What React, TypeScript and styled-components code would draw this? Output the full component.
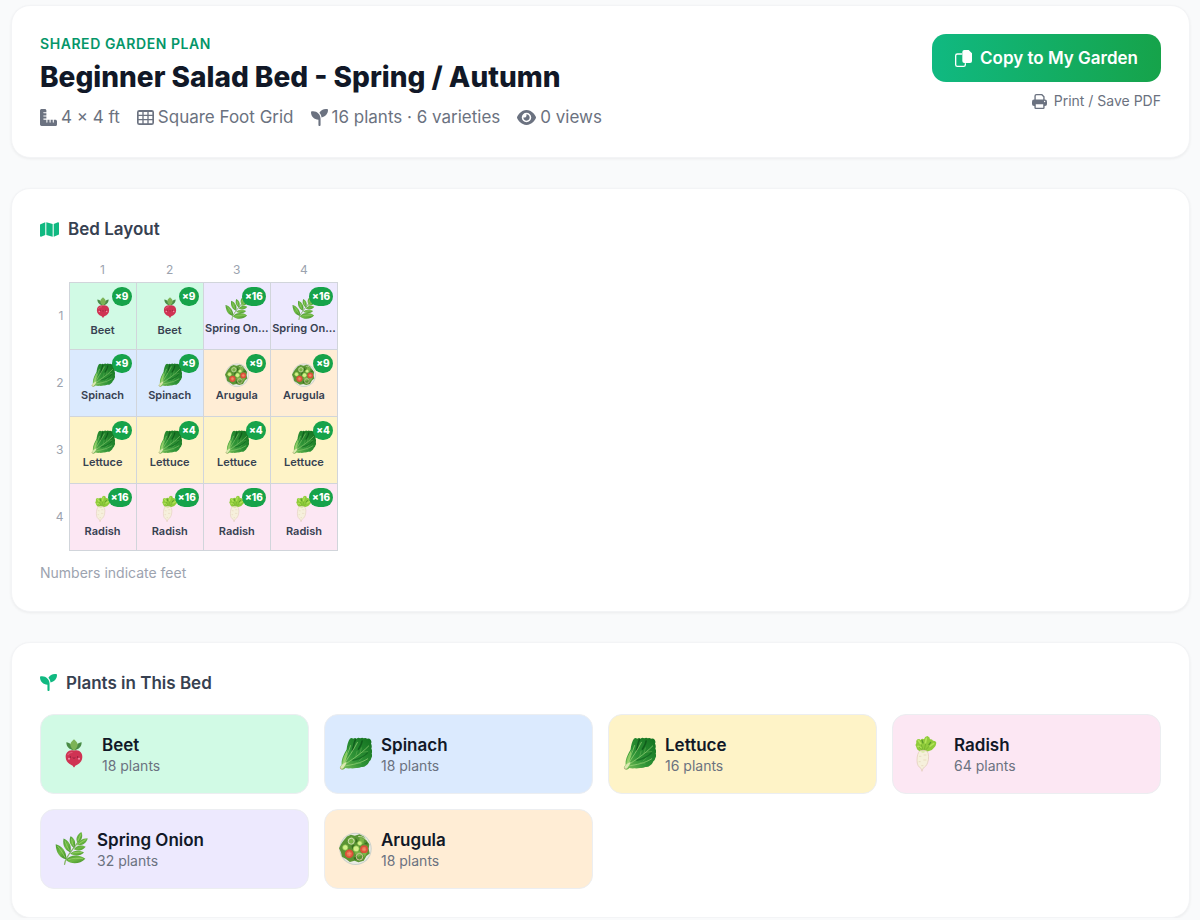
import React, { useId } from "react";
import styled, { createGlobalStyle } from "styled-components";
import { FaRulerCombined, FaSeedling, FaEye, FaMap } from "react-icons/fa6";

const GlobalStyle = createGlobalStyle`
  *, *::before, *::after { box-sizing: border-box; }
  body {
    margin: 0;
    background: #f9fafb;
    color: #111827;
    font-family: Inter, "Liberation Sans", sans-serif;
    -webkit-font-smoothing: antialiased;
  }
  h1, h2, h3, p, ul { margin: 0; padding: 0; }
  ul { list-style: none; }
  svg { display: block; flex: none; }
`;

/* ---------- icons ---------- */

const CopyIcon = () => (
  <svg width="17" height="17" viewBox="0 0 51 51" aria-hidden="true">
    <path d="M20 12H7a5 5 0 0 0-5 5v27a5 5 0 0 0 5 5h19a5 5 0 0 0 5-5v-3" fill="none" stroke="currentColor" strokeWidth="4" strokeLinecap="round" />
    <path d="M28 0h13l10 10v23a6 6 0 0 1-6 6H28a6 6 0 0 1-6-6V6a6 6 0 0 1 6-6z" fill="currentColor" />
  </svg>
);

const PrintIcon = () => (
  <svg width="15" height="15" viewBox="0 0 44 44" aria-hidden="true">
    <path d="M9 18V6a4 4 0 0 1 4-4h16l6 6v10" fill="none" stroke="currentColor" strokeWidth="4" />
    <rect y="16" width="44" height="19" rx="6" fill="currentColor" />
    <rect x="9" y="28" width="26" height="14" rx="2" fill="#ffffff" stroke="currentColor" strokeWidth="4" />
    <circle cx="37" cy="22" r="2" fill="#ffffff" />
  </svg>
);

const GridIcon = () => (
  <svg width="17" height="15" viewBox="0 0 51 45" aria-hidden="true">
    <path
      fill="currentColor"
      fillRule="evenodd"
      d="M7 0h37a7 7 0 0 1 7 7v31a7 7 0 0 1-7 7H7a7 7 0 0 1-7-7V7a7 7 0 0 1 7-7zM5 6v8h11V6zM20 6v8h11V6zM35 6v8h11V6zM5 18v9h11v-9zM20 18v9h11v-9zM35 18v9h11v-9zM5 31v9h11v-9zM20 31v9h11v-9zM35 31v9h11v-9z"
    />
  </svg>
);

/* ---------- plant drawings ---------- */

const BeetArt = ({ size }: { size: number }) => (
  <svg width={size} height={size} viewBox="0 0 114 114" aria-hidden="true">
    <path d="M56 46C44 44 34 36 34 22c6 0 10 3 13 6 0 0 9 8 9 18z" fill="#4a8c46" />
    <path d="M58 46c12-2 22-10 22-24-6 0-10 3-13 6 0 0-9 8-9 18z" fill="#4a8c46" />
    <path d="M57 48c-6-6-11-12-11-20 0-6 6-9 11-15 5 6 11 9 11 15 0 8-5 14-11 20z" fill="#7cb356" />
    <path d="M57 47c16-4 25 6 25 19 0 13-9 20-17 24-4 2-5 3-6 6-1 1-3 1-4 0-1-3-2-4-6-6-8-4-17-11-17-24 0-13 9-23 25-19z" fill="#cf3353" />
    <path d="M39 59c3-5 8-7 12-7" stroke="#de5a75" strokeWidth="4" fill="none" strokeLinecap="round" />
    <circle cx="46" cy="66" r="2" fill="#7d1c36" />
    <circle cx="68" cy="66" r="2" fill="#7d1c36" />
    <path d="M53 68q4 4 8 0" stroke="#7d1c36" strokeWidth="2" fill="none" />
    <circle cx="42" cy="71" r="3" fill="#f58ca4" />
    <circle cx="72" cy="71" r="3" fill="#f58ca4" />
  </svg>
);

const LeafyArt = ({ size }: { size: number }) => {
  const id = useId();
  return (
    <svg width={size} height={size} viewBox="0 0 100 100" aria-hidden="true">
      <defs>
        <linearGradient id={id} x1="0" y1="1" x2="1" y2="0">
          <stop offset="0" stopColor="#86c45c" />
          <stop offset="0.4" stopColor="#2f9437" />
          <stop offset="1" stopColor="#12701f" />
        </linearGradient>
      </defs>
      <path
        d="M4 96C1 94 3 90 8 85 6 68 16 50 23 38 24 26 28 12 33 5q5-4 10 0 6-4 10 0 6-5 11-1 7-3 11 0 6-3 10 1 7-2 11 3 4 6 1 12 4 8 1 15 4 8 1 15 3 8-1 14-1 8-7 11-2 8-9 11-6 6-14 5-8 4-16 3-9 2-17 1-9 1-16-1c-4 5-10 7-15 2z"
        fill={`url(#${id})`}
      />
      <path d="M10 84C11 64 19 50 26 38 24 58 20 72 18 82z" fill="#8ccb62" />
      <path d="M50 8c-6 12-6 22-9 32M70 12c-1 11-7 18-11 25" stroke="#0a4f17" strokeWidth="5" fill="none" strokeLinecap="round" opacity="0.7" />
      <path d="M86 48c-10 13-26 18-44 23" stroke="#0e5c1c" strokeWidth="4" fill="none" strokeLinecap="round" opacity="0.6" />
      <path d="M14 86C36 70 64 54 90 27M14 84C28 62 44 40 56 16M15 88c26-4 50-8 72-22M13 82C20 64 28 48 35 26" stroke="#a2d97f" strokeWidth="2" fill="none" strokeLinecap="round" />
      <path d="M63 52l5-20M50 62l5-20M70 46l18-2M50 76l18 6M60 74l12-12" stroke="#6fba5c" strokeWidth="2" fill="none" opacity="0.7" />
      <path d="M4 91c4-6 10-12 19-15-2 8-6 13-9 17l-6 5c-3 0-5-3-4-7z" fill="#dce8b0" />
      <path d="M4 91c-2 5 3 9 8 6-4 0-7-2-8-6z" fill="#bd9c80" />
    </svg>
  );
};

const HerbArt = ({ size }: { size: number }) => {
  const id = useId();
  return (
    <svg width={size} height={size} viewBox="0 0 100 100" aria-hidden="true">
      <defs>
        <linearGradient id={id} x1="0" y1="0" x2="1" y2="1">
          <stop offset="0" stopColor="#4a9a30" />
          <stop offset="0.5" stopColor="#6fb945" />
          <stop offset="1" stopColor="#3c8a25" />
        </linearGradient>
      </defs>
      <path d="M29 98c1-24 24-42 43-70" stroke="#86b566" strokeWidth="4" fill="none" strokeLinecap="round" />
      <g fill={`url(#${id})`}>
        <path d="M34 82C16 80 3 64 2 37c18 4 34 22 32 45z" />
        <path d="M46 61C30 56 22 40 26 20c17 6 26 24 20 41z" />
        <path d="M58 48c-12-6-17-20-11-35 13 6 18 20 11 35z" />
        <path d="M68 32c-7-11-1-24 12-32 6 13 1 26-12 32z" />
        <path d="M67 40c2-12 14-21 32-21-2 14-16 23-32 21z" />
        <path d="M57 52c7-11 23-15 36-7-9 12-23 14-36 7z" />
        <path d="M46 66c9-10 28-12 42-4-10 11-28 12-42 4z" />
        <path d="M33 85c11-16 38-19 59-4-16 16-41 19-59 4z" />
      </g>
      <g stroke="#a5da76" strokeWidth="2" fill="none">
        <path d="M31 78C23 63 15 51 7 42" />
        <path d="M44 57C37 46 33 35 30 26" />
        <path d="M57 44c-4-8-6-16-7-24" />
        <path d="M70 27c3-8 6-14 8-20" />
        <path d="M71 37c8-6 14-10 22-14" />
        <path d="M40 84c14-5 30-5 45-3" />
        <path d="M52 64c10-3 20-3 29-2" />
      </g>
    </svg>
  );
};

const SaladArt = ({ size }: { size: number }) => (
  <svg width={size} height={size} viewBox="0 0 100 100" aria-hidden="true">
    <circle cx="50" cy="51" r="49" fill="#ccd1ca" />
    <circle cx="50" cy="51" r="46" fill="#e9ebe4" />
    <path d="M12 28 24 14l12-6 12 3 14-4 13 7 8 11 9 12-2 14 3 14-10 8-8 14-16 5-12-5-14 4-12-9-12-7-3-14-6-12 6-12z" fill="#5b9434" />
    <path d="M26 22l12-8 12 10-8 12-14 0zM62 14l14 8-2 14-12-4zM18 62l14 0 4 14-12-2zM46 62l16-4 10 10-14 8zM70 64l16-4-8 16z" fill="#7cb548" />
    <path d="M50 18l8 10-8 6zM38 42l8-4 2 10-8 4zM76 36l8-6 4 8zM44 78l8-4 2 10-8-1z" fill="#38701f" />
    <circle cx="37" cy="28" r="9" stroke="#cfdcb2" strokeWidth="3" fill="none" />
    <circle cx="62" cy="75" r="10" stroke="#cdbf98" strokeWidth="3" fill="none" />
    <path d="M58 14c10-2 17 2 23 10" stroke="#c3d8a4" strokeWidth="3" fill="none" />
    <circle cx="31" cy="66" r="13" fill="#dc4f3a" />
    <circle cx="31" cy="66" r="8" fill="#ea6b4e" />
    <circle cx="76" cy="52" r="12" fill="#dc4f3a" />
    <circle cx="76" cy="52" r="7" fill="#ea6b4e" />
    <path d="M31 60v12M25 66h12M76 47v10M71 52h10" stroke="#f0a179" strokeWidth="2" />
    <g fill="#d3f08a" stroke="#86bd48" strokeWidth="2">
      <circle cx="19" cy="47" r="8" />
      <circle cx="52" cy="51" r="9" />
      <circle cx="63" cy="34" r="7" />
    </g>
  </svg>
);

const RadishArt = ({ size }: { size: number }) => (
  <svg width={size} height={size} viewBox="0 0 114 114" aria-hidden="true">
    <path
      d="M48 50C38 50 30 46 28 36q-5-6 0-12-2-9 5-12 5-1 8 3 4-6 10-2 2-9 10-10 8 2 8 10 7-2 9 4 8-1 10 6-1 10-7 15-6 9-15 10c-5 2-12 2-18 2z"
      fill="#8fcb3a"
    />
    <path d="M34 16l7 10M58 10l-3 14M80 26 68 34M33 34l9 4" stroke="#b3e35a" strokeWidth="5" strokeLinecap="round" />
    <path d="M45 16l3 8M71 22l-5 7" stroke="#5c9a2b" strokeWidth="4" strokeLinecap="round" />
    <path d="M50 48 42 28M51 48l5-22M53 48l15-16M48 47 36 36" stroke="#6bab2b" strokeWidth="2" fill="none" />
    <path
      d="M38 48c6-3 17-3 22 1 6 6 6 22 2 34-3 9-9 14-14 17l-3 9-3-9c-8-4-12-12-12-24 0-13 3-24 8-28z"
      fill="#f6f0dc"
      stroke="#dfc8b4"
      strokeWidth="2"
    />
    <path d="M36 64h7M50 60h8M35 80h6M49 75h9M43 92h6" stroke="#e2d1b4" strokeWidth="2" />
    <path d="M40 50c4-3 12-3 16 0l-8 4z" fill="#dcebaa" />
  </svg>
);

/* ---------- data ---------- */

type Plant = {
  name: string;
  shortName?: string;
  color: string;
  total: number;
  perFoot: number;
  Art: React.ComponentType<{ size: number }>;
  cellArt: number;
  cardArt: number;
};

const beet: Plant = { name: "Beet", color: "#d1fae5", total: 18, perFoot: 9, Art: BeetArt, cellArt: 28, cardArt: 38 };
const spinach: Plant = { name: "Spinach", color: "#dbeafe", total: 18, perFoot: 9, Art: LeafyArt, cellArt: 24, cardArt: 33 };
const lettuce: Plant = { name: "Lettuce", color: "#fef3c7", total: 16, perFoot: 4, Art: LeafyArt, cellArt: 24, cardArt: 33 };
const radish: Plant = { name: "Radish", color: "#fce7f3", total: 64, perFoot: 16, Art: RadishArt, cellArt: 28, cardArt: 38 };
const onion: Plant = { name: "Spring Onion", shortName: "Spring On…", color: "#ede9fe", total: 32, perFoot: 16, Art: HerbArt, cellArt: 24, cardArt: 33 };
const arugula: Plant = { name: "Arugula", color: "#ffedd5", total: 18, perFoot: 9, Art: SaladArt, cellArt: 24, cardArt: 33 };

const plants = [beet, spinach, lettuce, radish, onion, arugula];

const bed: Plant[][] = [
  [beet, beet, onion, onion],
  [spinach, spinach, arugula, arugula],
  [lettuce, lettuce, lettuce, lettuce],
  [radish, radish, radish, radish],
];

/* ---------- layout ---------- */

const Page = styled.main`
  display: flex;
  flex-direction: column;
  gap: 30px;
  padding: 5px 10px 0 11px;
`;

const Card = styled.section`
  padding: 28px;
  background: #ffffff;
  border: 1px solid #f3f4f6;
  border-radius: 19px;
  box-shadow: 0 1px 3px rgba(0, 0, 0, 0.06);
`;

const HeaderCard = styled(Card).attrs({ as: "header" })`
  display: flex;
  justify-content: space-between;
  align-items: flex-start;
  gap: 24px;
`;

const Eyebrow = styled.p`
  font-size: 14px;
  line-height: 20px;
  font-weight: 600;
  letter-spacing: 0.04em;
  text-transform: uppercase;
  color: #059669;
`;

const Title = styled.h1`
  margin-top: 5px;
  font-size: 28px;
  line-height: 36px;
  font-weight: 800;
  color: #111827;
`;

const MetaList = styled.ul`
  display: flex;
  flex-wrap: wrap;
  gap: 17px;
  margin-top: 10px;
`;

const MetaItem = styled.li`
  display: flex;
  align-items: center;
  gap: 4px;
  font-size: 17px;
  line-height: 24px;
  color: #6b7280;
`;

const Actions = styled.div`
  display: flex;
  flex-direction: column;
  align-items: flex-end;
  gap: 9px;
`;

const CopyButton = styled.button`
  display: flex;
  align-items: center;
  gap: 8px;
  padding: 12px 23px;
  border: 0;
  border-radius: 14px;
  background: linear-gradient(to right, #10b981, #16a34a);
  color: #ffffff;
  font: 600 17px/24px Inter, "Liberation Sans", sans-serif;
  cursor: pointer;
`;

const PrintButton = styled.button`
  display: flex;
  align-items: center;
  gap: 7px;
  padding: 0;
  border: 0;
  background: none;
  color: #6b7280;
  font: 400 14px/20px Inter, "Liberation Sans", sans-serif;
  cursor: pointer;
`;

const SectionTitle = styled.h2`
  display: flex;
  align-items: center;
  gap: 9px;
  font-size: 17px;
  line-height: 24px;
  font-weight: 600;
  color: #374151;

  svg {
    color: #10b981;
  }
`;

const BedTable = styled.table`
  margin-top: 17px;
  border-collapse: collapse;
  table-layout: fixed;
  width: 298px;
`;

const CornerHead = styled.td`
  width: 29px;
  padding: 0;
`;

const ColumnHead = styled.th`
  height: 24px;
  padding: 0;
  font-size: 12px;
  line-height: 16px;
  font-weight: 400;
  color: #9ca3af;
`;

const RowHead = styled.th`
  padding: 0 5px 0 0;
  font-size: 12px;
  line-height: 16px;
  font-weight: 400;
  text-align: right;
  color: #9ca3af;
`;

const Cell = styled.td<{ $color: string }>`
  position: relative;
  height: 67px;
  padding: 0;
  border: 1px solid #d1d5db;
  background: ${(p) => p.$color};
`;

const CellBody = styled.div`
  display: flex;
  flex-direction: column;
  align-items: center;
`;

const CellName = styled.span`
  white-space: nowrap;
  font-size: 11px;
  line-height: 16px;
  font-weight: 600;
  color: #374151;
`;

const Badge = styled.span`
  position: absolute;
  top: 4px;
  right: 4px;
  min-width: 20px;
  padding: 0 3px;
  border-radius: 10px;
  background: #16a34a;
  color: #ffffff;
  font-size: 10px;
  line-height: 19px;
  font-weight: 800;
  text-align: center;
`;

const Note = styled.p`
  margin-top: 12px;
  font-size: 14px;
  line-height: 20px;
  color: #9ca3af;
`;

const PlantGrid = styled.ul`
  display: grid;
  grid-template-columns: repeat(4, 1fr);
  gap: 15px;
  margin-top: 19px;

  @media (max-width: 800px) {
    grid-template-columns: repeat(2, 1fr);
  }
`;

const PlantCard = styled.li<{ $color: string }>`
  display: flex;
  align-items: center;
  gap: 9px;
  min-height: 80px;
  padding: 14px;
  border: 1px solid #eceef1;
  border-radius: 14px;
  background: ${(p) => p.$color};
`;

const PlantText = styled.div`
  padding-top: 2px;
`;

const PlantName = styled.h3`
  font-size: 17px;
  line-height: 22px;
  font-weight: 600;
  color: #111827;
`;

const PlantCount = styled.p`
  font-size: 14px;
  line-height: 20px;
  color: #6b7280;
`;

export default function App() {
  return (
    <>
      <GlobalStyle />
      <Page>
        <HeaderCard>
          <div>
            <Eyebrow>Shared Garden Plan</Eyebrow>
            <Title>Beginner Salad Bed - Spring / Autumn</Title>
            <MetaList>
              <MetaItem><FaRulerCombined />4 × 4 ft</MetaItem>
              <MetaItem><GridIcon />Square Foot Grid</MetaItem>
              <MetaItem><FaSeedling />16 plants · 6 varieties</MetaItem>
              <MetaItem><FaEye size={19} />0 views</MetaItem>
            </MetaList>
          </div>
          <Actions>
            <CopyButton type="button"><CopyIcon />Copy to My Garden</CopyButton>
            <PrintButton type="button"><PrintIcon />Print / Save PDF</PrintButton>
          </Actions>
        </HeaderCard>

        <Card>
          <SectionTitle><FaMap size={19} />Bed Layout</SectionTitle>
          <BedTable>
            <thead>
              <tr>
                <CornerHead />
                {bed[0].map((_, i) => (
                  <ColumnHead key={i} scope="col">{i + 1}</ColumnHead>
                ))}
              </tr>
            </thead>
            <tbody>
              {bed.map((row, r) => (
                <tr key={r}>
                  <RowHead scope="row">{r + 1}</RowHead>
                  {row.map(({ name, shortName, color, perFoot, Art, cellArt }, c) => (
                    <Cell key={c} $color={color}>
                      <CellBody>
                        <Art size={cellArt} />
                        <CellName>{shortName ?? name}</CellName>
                      </CellBody>
                      <Badge>×{perFoot}</Badge>
                    </Cell>
                  ))}
                </tr>
              ))}
            </tbody>
          </BedTable>
          <Note>Numbers indicate feet</Note>
        </Card>

        <Card>
          <SectionTitle><FaSeedling />Plants in This Bed</SectionTitle>
          <PlantGrid>
            {plants.map(({ name, color, total, Art, cardArt }) => (
              <PlantCard key={name} $color={color}>
                <Art size={cardArt} />
                <PlantText>
                  <PlantName>{name}</PlantName>
                  <PlantCount>{total} plants</PlantCount>
                </PlantText>
              </PlantCard>
            ))}
          </PlantGrid>
        </Card>
      </Page>
    </>
  );
}
